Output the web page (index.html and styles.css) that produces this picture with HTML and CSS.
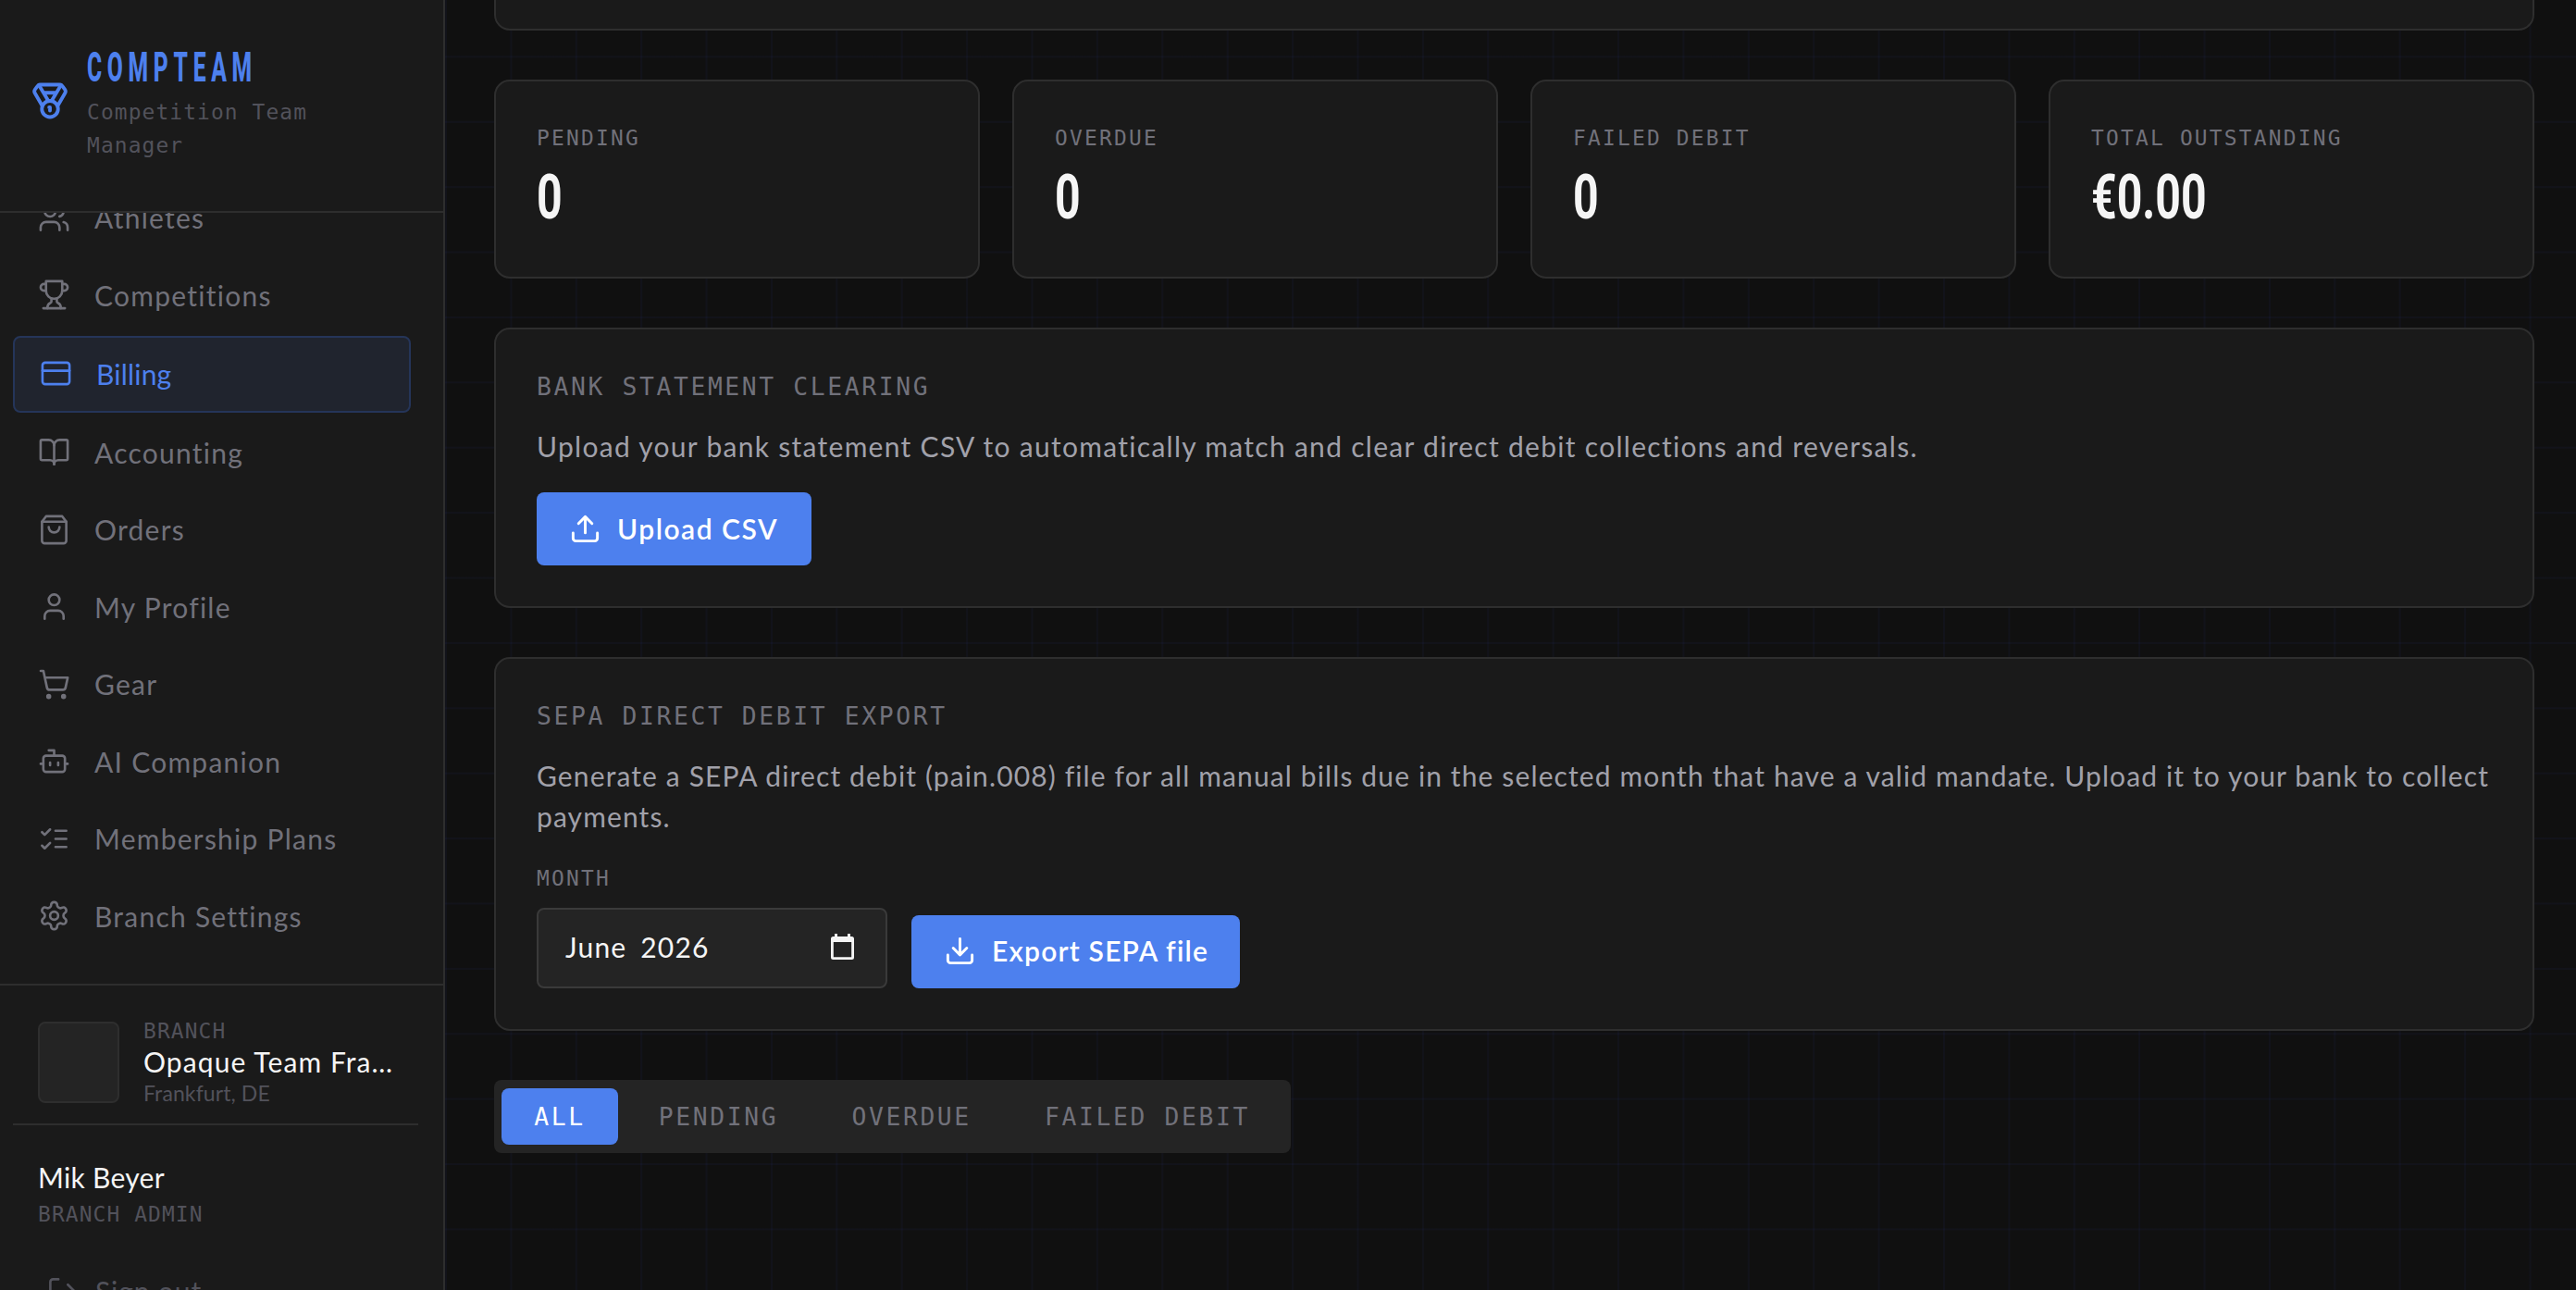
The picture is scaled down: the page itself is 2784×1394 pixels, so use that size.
FILE: index.html
```html
<!DOCTYPE html>
<html lang="en">

<head>
    <meta charset="UTF-8">
    <title>CompTeam - Billing</title>
    <link rel="stylesheet" href="styles.css">
</head>

<body>
    <aside class="sidebar">
        <div class="brand">
            <svg class="brand-icon" viewBox="0 0 24 24">
                <path d="M7.21 15 2.66 7.14a2 2 0 0 1 .13-2.2L4.4 2.8A2 2 0 0 1 6 2h12a2 2 0 0 1 1.6.8l1.6 2.14a2 2 0 0 1 .14 2.2L16.79 15" />
                <path d="M11 12 5.12 2.2M13 12l5.88-9.8M8 7h8" />
                <circle cx="12" cy="17" r="5" />
                <path d="M12 18v-2h-.5" />
            </svg>
            <div>
                <div class="brand-name"><span class="condensed">COMPTEAM</span></div>
                <div class="brand-sub">Competition Team Manager</div>
            </div>
        </div>

        <nav class="nav">
            <a class="nav-item">
                <svg class="icon" viewBox="0 0 24 24">
                    <path d="M16 21v-2a4 4 0 0 0-4-4H6a4 4 0 0 0-4 4v2" />
                    <circle cx="9" cy="7" r="4" />
                    <path d="M22 21v-2a4 4 0 0 0-3-3.87M16 3.13a4 4 0 0 1 0 7.75" />
                </svg>
                <span>Athletes</span>
            </a>
            <a class="nav-item">
                <svg class="icon" viewBox="0 0 24 24">
                    <path d="M6 9H4.5a2.5 2.5 0 0 1 0-5H6M18 9h1.5a2.5 2.5 0 0 0 0-5H18M4 22h16" />
                    <path d="M10 14.66V17c0 .55-.47.98-.97 1.21C7.85 18.75 7 20.24 7 22M14 14.66V17c0 .55.47.98.97 1.21C16.15 18.75 17 20.24 17 22" />
                    <path d="M18 2H6v7a6 6 0 0 0 12 0V2Z" />
                </svg>
                <span>Competitions</span>
            </a>
            <a class="nav-item active">
                <svg class="icon" viewBox="0 0 24 24">
                    <rect x="2" y="4" width="20" height="16" rx="2" />
                    <path d="M2 10h20" />
                </svg>
                <span>Billing</span>
            </a>
            <a class="nav-item">
                <svg class="icon" viewBox="0 0 24 24">
                    <path d="M12 7v14" />
                    <path d="M3 18a1 1 0 0 1-1-1V4a1 1 0 0 1 1-1h5a4 4 0 0 1 4 4 4 4 0 0 1 4-4h5a1 1 0 0 1 1 1v13a1 1 0 0 1-1 1h-6a3 3 0 0 0-3 3 3 3 0 0 0-3-3z" />
                </svg>
                <span>Accounting</span>
            </a>
            <a class="nav-item">
                <svg class="icon" viewBox="0 0 24 24">
                    <path d="M6 2 3 6v14a2 2 0 0 0 2 2h14a2 2 0 0 0 2-2V6l-3-4Z" />
                    <path d="M3 6h18M16 10a4 4 0 0 1-8 0" />
                </svg>
                <span>Orders</span>
            </a>
            <a class="nav-item">
                <svg class="icon" viewBox="0 0 24 24">
                    <path d="M19 21v-2a4 4 0 0 0-4-4H9a4 4 0 0 0-4 4v2" />
                    <circle cx="12" cy="7" r="4" />
                </svg>
                <span>My Profile</span>
            </a>
            <a class="nav-item">
                <svg class="icon" viewBox="0 0 24 24">
                    <circle cx="8" cy="21" r="1" />
                    <circle cx="19" cy="21" r="1" />
                    <path d="M2.05 2.05h2l2.66 12.42a2 2 0 0 0 2 1.58h9.78a2 2 0 0 0 1.95-1.57l1.65-7.43H5.12" />
                </svg>
                <span>Gear</span>
            </a>
            <a class="nav-item">
                <svg class="icon" viewBox="0 0 24 24">
                    <path d="M12 8V4H8" />
                    <rect x="4" y="8" width="16" height="12" rx="2" />
                    <path d="M2 14h2M20 14h2M15 13v2M9 13v2" />
                </svg>
                <span>AI Companion</span>
            </a>
            <a class="nav-item">
                <svg class="icon" viewBox="0 0 24 24">
                    <path d="m3 17 2 2 4-4M3 7l2 2 4-4M13 6h8M13 12h8M13 18h8" />
                </svg>
                <span>Membership Plans</span>
            </a>
            <a class="nav-item">
                <svg class="icon" viewBox="0 0 24 24">
                    <path d="M12.22 2h-.44a2 2 0 0 0-2 2v.18a2 2 0 0 1-1 1.73l-.43.25a2 2 0 0 1-2 0l-.15-.08a2 2 0 0 0-2.73.73l-.22.38a2 2 0 0 0 .73 2.73l.15.1a2 2 0 0 1 1 1.72v.51a2 2 0 0 1-1 1.74l-.15.09a2 2 0 0 0-.73 2.73l.22.38a2 2 0 0 0 2.73.73l.15-.08a2 2 0 0 1 2 0l.43.25a2 2 0 0 1 1 1.73V20a2 2 0 0 0 2 2h.44a2 2 0 0 0 2-2v-.18a2 2 0 0 1 1-1.73l.43-.25a2 2 0 0 1 2 0l.15.08a2 2 0 0 0 2.73-.73l.22-.39a2 2 0 0 0-.73-2.73l-.15-.08a2 2 0 0 1-1-1.74v-.5a2 2 0 0 1 1-1.74l.15-.09a2 2 0 0 0 .73-2.73l-.22-.38a2 2 0 0 0-2.73-.73l-.15.08a2 2 0 0 1-2 0l-.43-.25a2 2 0 0 1-1-1.73V4a2 2 0 0 0-2-2z" />
                    <circle cx="12" cy="12" r="3" />
                </svg>
                <span>Branch Settings</span>
            </a>
        </nav>

        <div class="sidebar-footer">
            <div class="branch">
                <div class="branch-logo"></div>
                <div class="branch-info">
                    <div class="mono-small">BRANCH</div>
                    <div class="branch-name">Opaque Team Fra…</div>
                    <div class="branch-city">Frankfurt, DE</div>
                </div>
            </div>
            <div class="user">
                <div class="user-name">Mik Beyer</div>
                <div class="mono-small">BRANCH ADMIN</div>
            </div>
            <a class="sign-out">
                <svg class="icon" viewBox="0 0 24 24">
                    <path d="M9 21H5a2 2 0 0 1-2-2V5a2 2 0 0 1 2-2h4M16 17l5-5-5-5M21 12H9" />
                </svg>
                <span>Sign out</span>
            </a>
        </div>
    </aside>

    <main class="main">
        <section class="card card-cut"></section>

        <div class="stats">
            <div class="card stat">
                <div class="label">PENDING</div>
                <div class="value"><span class="condensed">0</span></div>
            </div>
            <div class="card stat">
                <div class="label">OVERDUE</div>
                <div class="value"><span class="condensed">0</span></div>
            </div>
            <div class="card stat">
                <div class="label">FAILED DEBIT</div>
                <div class="value"><span class="condensed">0</span></div>
            </div>
            <div class="card stat">
                <div class="label">TOTAL OUTSTANDING</div>
                <div class="value"><span class="condensed">€0.00</span></div>
            </div>
        </div>

        <section class="card bank">
            <h2 class="card-title">BANK STATEMENT CLEARING</h2>
            <p class="card-text">Upload your bank statement CSV to automatically match and clear direct debit collections and reversals.</p>
            <button class="btn btn-upload">
                <svg class="icon" viewBox="0 0 24 24">
                    <path d="M21 15v4a2 2 0 0 1-2 2H5a2 2 0 0 1-2-2v-4M17 8l-5-5-5 5M12 3v12" />
                </svg>
                <span>Upload CSV</span>
            </button>
        </section>

        <section class="card sepa">
            <h2 class="card-title">SEPA DIRECT DEBIT EXPORT</h2>
            <p class="card-text">Generate a SEPA direct debit (pain.008) file for all manual bills due in the selected month that have a valid mandate. Upload it to your bank to collect payments.</p>
            <div class="export-row">
                <div class="field">
                    <div class="label">MONTH</div>
                    <div class="month-input">
                        <span>June 2026</span>
                        <svg class="calendar" viewBox="0 0 25 28">
                            <path fill-rule="evenodd" d="M4 0h3v3h11V0h3v3h1.500a2.500 2.500 0 0 1 2.500 2.500v20a2.500 2.500 0 0 1-2.500 2.500h-20A2.500 2.500 0 0 1 0 25.500v-20A2.500 2.500 0 0 1 2.500 3H4zM2.800 9v16.200h19.400V9z" />
                        </svg>
                    </div>
                </div>
                <button class="btn btn-export">
                    <svg class="icon" viewBox="0 0 24 24">
                        <path d="M21 15v4a2 2 0 0 1-2 2H5a2 2 0 0 1-2-2v-4M7 10l5 5 5-5M12 15V3" />
                    </svg>
                    <span>Export SEPA file</span>
                </button>
            </div>
        </section>

        <div class="tabs">
            <button class="tab active">ALL</button>
            <button class="tab">PENDING</button>
            <button class="tab">OVERDUE</button>
            <button class="tab">FAILED DEBIT</button>
        </div>
    </main>
</body>

</html>
```
FILE: styles.css
```css
* {
    box-sizing: border-box;
}

body {
    margin: 0;
    height: 1394px;
    overflow: hidden;
    display: flex;
    background: #101010;
    color: #f5f5f5;
    font-family: Lato, "Noto Sans", sans-serif;
    font-size: 30px;
}

.icon {
    width: 35px;
    height: 35px;
    flex: none;
}

.icon,
.brand-icon {
    fill: none;
    stroke: currentColor;
    stroke-width: 1.8;
    stroke-linecap: round;
    stroke-linejoin: round;
}

.condensed {
    display: inline-block;
    font-family: Roboto, sans-serif;
    font-weight: 700;
    transform: scaleX(0.73);
    transform-origin: left;
}

/* sidebar */
.sidebar {
    width: 481px;
    height: 1394px;
    flex: none;
    display: flex;
    flex-direction: column;
    overflow: hidden;
    background: #1a1a1a;
    border-right: 2px solid #2e2e2e;
}

.brand {
    height: 230px;
    flex: none;
    display: flex;
    align-items: flex-start;
    gap: 19px;
    padding: 46px 34px 0 33px;
    border-bottom: 2px solid #2e2e2e;
}

.brand-icon {
    width: 42px;
    height: 42px;
    flex: none;
    margin-top: 42px;
    color: #4d80ee;
    stroke-width: 2.2;
}

.brand-name {
    height: 57px;
    line-height: 51px;
    font-size: 44px;
    letter-spacing: 10.2px;
    color: #4d80ee;
}

.brand-name .condensed {
    font-weight: 800;
    transform: scaleX(0.56);
}

.brand-sub {
    width: 280px;
    font-family: "DejaVu Sans Mono", monospace;
    font-size: 22.9px;
    line-height: 36px;
    letter-spacing: 1.1px;
    color: #52525b;
}

.nav {
    height: 835px;
    flex: none;
    display: flex;
    flex-direction: column;
    justify-content: flex-end;
    gap: 3.5px;
    padding: 0 35px 33px 14px;
    overflow: hidden;
    border-bottom: 2px solid #2e2e2e;
}

.nav-item {
    height: 80px;
    flex: none;
    display: flex;
    align-items: center;
    gap: 26px;
    padding: 0 0 1px 27px;
    border-radius: 8px;
    color: #71717a;
    letter-spacing: 1.25px;
}

.nav-item.active {
    height: 83px;
    background: #20242e;
    border: 2px solid #253559;
    color: #4d80ee;
    letter-spacing: 0.2px;
}

.sidebar-footer {
    padding: 39px 27px 0 14px;
}

.branch {
    height: 112px;
    display: flex;
    gap: 26px;
    padding-left: 27px;
    border-bottom: 2px solid #2e2e2e;
}

.branch-logo {
    width: 88px;
    height: 88px;
    flex: none;
    background: #242424;
    border: 2px solid #2e2e2e;
    border-radius: 8px;
}

.mono-small {
    font-family: "DejaVu Sans Mono", monospace;
    font-size: 22.9px;
    line-height: 20px;
    letter-spacing: 1.1px;
    color: #52525b;
}

.branch-name {
    margin-top: 3px;
    line-height: 40px;
    letter-spacing: 1.1px;
    white-space: nowrap;
}

.branch-city {
    font-size: 23px;
    line-height: 28px;
    letter-spacing: 0.1px;
    color: #52525b;
}

.user {
    padding: 36px 27px 0;
}

.user-name {
    line-height: 40px;
    margin-bottom: 10px;
    letter-spacing: 0.3px;
}

.sign-out {
    display: flex;
    align-items: center;
    gap: 18px;
    padding: 55px 0 0 36px;
    color: #52525b;
    letter-spacing: 0.9px;
}

/* main content with grid lines behind the cards */
.main {
    flex: 1;
    height: 1394px;
    padding: 0 45px 0 53px;
    overflow: hidden;
    background-image:
        linear-gradient(rgba(70, 90, 255, 0.045) 2px, transparent 2px),
        linear-gradient(90deg, rgba(70, 90, 255, 0.045) 2px, transparent 2px);
    background-size: 70.4px 70.4px;
    background-position: 0 -10px;
}

.card {
    background: #1a1a1a;
    border: 2px solid #2e2e2e;
    border-radius: 17px;
}

.card-cut {
    height: 33px;
    border-top: none;
    border-radius: 0 0 17px 17px;
}

.stats {
    display: grid;
    grid-template-columns: repeat(4, 1fr);
    gap: 35px;
    margin-top: 53px;
}

.stat {
    height: 215px;
    padding: 46px 44px;
}

.label {
    font-family: "DejaVu Sans Mono", monospace;
    font-size: 22.9px;
    line-height: 30px;
    letter-spacing: 2.2px;
    color: #71717a;
}

.value {
    margin-top: 7px;
    font-size: 66px;
    line-height: 80px;
}

.bank {
    height: 303px;
    margin-top: 53px;
    padding: 44px;
}

.sepa {
    height: 404px;
    margin-top: 53px;
    padding: 44px 36px 0 44px;
}

.card-title {
    margin: 0 0 24px;
    font-family: "DejaVu Sans Mono", monospace;
    font-size: 26.4px;
    font-weight: 400;
    line-height: 36px;
    letter-spacing: 2.6px;
    color: #71717a;
}

.card-text {
    margin: 0;
    line-height: 44px;
    color: #a1a1aa;
    letter-spacing: 1.29px;
}

.sepa .card-text {
    letter-spacing: 1.12px;
}

.btn {
    height: 79px;
    display: flex;
    align-items: center;
    gap: 17px;
    padding: 0 35px 1px;
    border: none;
    border-radius: 8px;
    background: #4d80ee;
    color: #fff;
    font-family: Lato, "Noto Sans", sans-serif;
    font-size: 30px;
    font-weight: 600;
    letter-spacing: 1.2px;
    white-space: nowrap;
}

.btn .icon {
    stroke-width: 2;
}

.btn-upload {
    width: 297px;
    margin-top: 28px;
    letter-spacing: 1.5px;
}

.btn-export {
    width: 355px;
    padding-bottom: 3px;
}

.export-row {
    display: flex;
    align-items: flex-end;
    gap: 26px;
    margin-top: 30px;
}

.month-input {
    width: 379px;
    height: 87px;
    display: flex;
    align-items: center;
    justify-content: space-between;
    margin-top: 17px;
    padding: 0 34px 4px 29px;
    background: #242424;
    border: 2px solid #3a3a3a;
    border-radius: 8px;
    letter-spacing: 1.2px;
    word-spacing: 6px;
}

.calendar {
    width: 25px;
    height: 28px;
    fill: #f5f5f5;
}

.tabs {
    width: 861px;
    height: 79px;
    display: flex;
    gap: 8.8px;
    margin-top: 53px;
    padding: 9px 8px;
    background: #242424;
    border-radius: 8px;
}

.tab {
    height: 61px;
    padding: 0 35.2px;
    border: none;
    border-radius: 8px;
    background: none;
    color: #71717a;
    font-family: "DejaVu Sans Mono", monospace;
    font-size: 26.4px;
    letter-spacing: 2.6px;
    white-space: nowrap;
}

.tab.active {
    background: #4d80ee;
    color: #fff;
}
```
